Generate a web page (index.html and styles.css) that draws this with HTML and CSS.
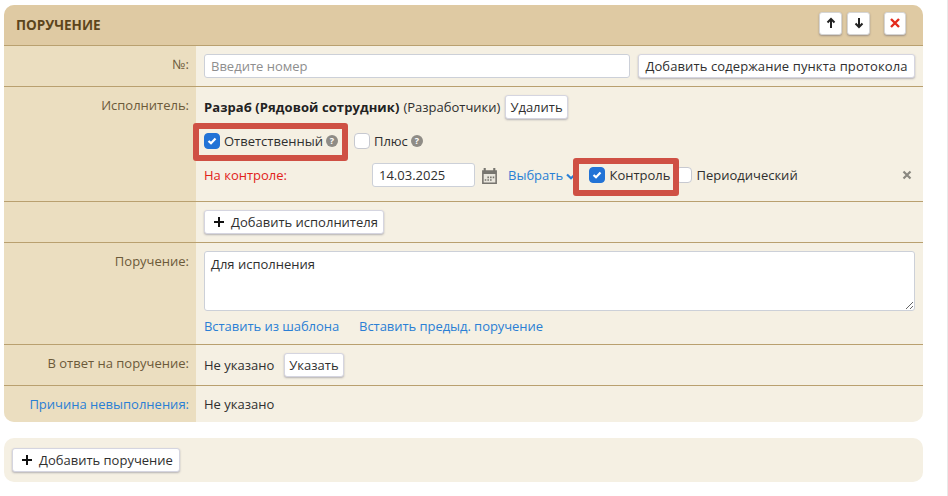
FILE: index.html
```html
<!DOCTYPE html>
<html lang="ru">
<head>
    <meta charset="UTF-8">
    <meta name="viewport" content="width=device-width, initial-scale=1.0">
    <title>Поручение</title>
    <link rel="stylesheet" href="styles.css">
</head>
<body>
    <div class="card">
        <div class="card-head">
            <h3>ПОРУЧЕНИЕ</h3>
            <div class="head-btns">
                <button class="btn-sq"><svg width="12" height="12" viewBox="0 0 12 12"><path d="M6 11V2M2.500 5.500 6 2l3.500 3.500" fill="none" stroke="#222" stroke-width="2"/></svg></button>
                <button class="btn-sq"><svg width="12" height="12" viewBox="0 0 12 12"><path d="M6 1v9M2.500 6.500 6 10l3.500-3.500" fill="none" stroke="#222" stroke-width="2"/></svg></button>
                <button class="btn-sq btn-close"><svg width="12" height="12" viewBox="0 0 12 12"><path d="M2 2l8 8M10 2l-8 8" fill="none" stroke="#e32a1c" stroke-width="2.400"/></svg></button>
            </div>
        </div>

        <div class="row row-num">
            <div class="label">№:</div>
            <div class="value value-line">
                <input class="txt txt-num" type="text" placeholder="Введите номер">
                <button class="btn btn-proto">Добавить содержание пункта протокола</button>
            </div>
        </div>

        <div class="row row-exec">
            <div class="label">Исполнитель:</div>
            <div class="value">
                <div class="exec-name">
                    <b>Разраб (Рядовой сотрудник)</b> (Разработчики)
                    <button class="btn btn-del">Удалить</button>
                </div>
                <div class="exec-flags">
                    <span class="flag flag-main"><i class="check on"><svg width="10" height="8" viewBox="0 0 10 8"><path d="M1.500 4l2.500 2.200L8.500 1.500" fill="none" stroke="#fff" stroke-width="2.200"/></svg></i>Ответственный <i class="hint">?</i></span>
                    <span class="flag"><i class="check"></i>Плюс <i class="hint">?</i></span>
                    <span class="mark mark-main"></span>
                </div>
                <div class="exec-control">
                    <span class="control-label">На контроле:</span>
                    <input class="txt txt-date" type="text" value="14.03.2025">
                    <svg class="cal" width="17" height="17" viewBox="0 0 16 16"><path d="M1 3h14v13H1z" fill="#77756f"/><path d="M3.500 1v3M12.500 1v3" stroke="#77756f" stroke-width="2"/><path d="M2.500 6.500h11v8h-11z" fill="#e9e6dd"/><path d="M6 9h1.500v1.500H6zM8.500 9H10v1.500H8.500zM11 9h1.500v1.500H11zM3.500 11.500H5V13H3.500zM6 11.500h1.500V13H6zM8.500 11.500H10V13H8.500z" fill="#77756f"/></svg>
                    <a class="link pick" href="#">Выбрать <svg width="10" height="7" viewBox="0 0 10 7"><path d="M1 1.500l4 3.800 4-3.800" fill="none" stroke="#2a7fd5" stroke-width="2.200"/></svg></a>
                    <span class="flag flag-ctrl"><i class="check on"><svg width="10" height="8" viewBox="0 0 10 8"><path d="M1.500 4l2.500 2.200L8.500 1.500" fill="none" stroke="#fff" stroke-width="2.200"/></svg></i>Контроль</span>
                    <span class="flag flag-period"><i class="check"></i>Периодический</span>
                    <svg class="del" width="10" height="10" viewBox="0 0 10 10"><path d="M1.500 1.500l7 7M8.500 1.500l-7 7" fill="none" stroke="#8a8880" stroke-width="2.200"/></svg>
                    <span class="mark mark-ctrl"></span>
                </div>
            </div>
        </div>

        <div class="row row-add">
            <div class="label"></div>
            <div class="value">
                <button class="btn btn-plus"><span class="plus"></span>Добавить исполнителя</button>
            </div>
        </div>

        <div class="row row-task">
            <div class="label">Поручение:</div>
            <div class="value">
                <textarea class="area">Для исполнения</textarea>
                <div class="task-links">
                    <a class="link" href="#">Вставить из шаблона</a>
                    <a class="link" href="#">Вставить предыд. поручение</a>
                </div>
            </div>
        </div>

        <div class="row row-reply">
            <div class="label">В ответ на поручение:</div>
            <div class="value value-line">
                Не указано
                <button class="btn">Указать</button>
            </div>
        </div>

        <div class="row row-reason">
            <div class="label"><a class="link" href="#">Причина невыполнения:</a></div>
            <div class="value">Не указано</div>
        </div>
    </div>

    <div class="card-bottom">
        <button class="btn btn-plus"><span class="plus"></span>Добавить поручение</button>
    </div>
</body>
</html>
```

FILE: styles.css
```css
*{box-sizing:border-box;}
html,body{height:100%;}
body{margin:0;padding:5px 24px 0 4px;background:#fff;border-right:1px solid #e9e9e9;color:#2f2f2f;font-family:'Open Sans','Noto Sans',sans-serif;font-size:13px;line-height:18px;overflow:hidden;}
button,input,textarea{font:inherit;color:inherit;}
a{text-decoration:none;}
.link{color:#2a7fd5;}

.card{background:#f5f0e3;border-radius:10px;overflow:hidden;}
.card-head{display:flex;align-items:center;justify-content:space-between;height:41px;padding:0 17px 0 12px;background:#dfcaa3;border-bottom:1px solid #b9a06f;}
.card-head h3{margin:0;color:#5c451c;font-size:13.500px;font-weight:700;}
.head-btns{display:flex;gap:5px;margin-bottom:4px;}
.btn-sq{display:flex;align-items:center;justify-content:center;width:23px;height:23px;padding:0;background:#fff;border:1px solid #d5d5d5;border-radius:3px;box-shadow:0 1px 2px rgba(60,60,90,.4);}
.btn-close{width:22px;margin-left:9px;}

.row{display:flex;border-bottom:1px solid #b9a06f;}
.row:last-child{border-bottom:0;}
.label{flex:0 0 192px;padding:9px 7px 0 0;background:#ebdec0;color:#6b5a3a;text-align:right;}
.value{flex:1;padding:8px 8px 0 8px;min-width:0;}
.value-line{display:flex;align-items:center;padding-top:0;}

.row-num{height:41px;}
.row-exec{height:115px;}
.row-add{height:41px;}
.row-task{height:102px;}
.row-reply{height:41px;}
.row-reason{height:36px;}
.row-reason .value{padding-top:9px;}

.txt{height:24px;padding:0 6px;background:#fff;border:1px solid #ccd0d8;border-radius:3px;outline:0;}
.txt::placeholder{color:#8e8e8e;}
.txt-num{width:426px;margin-right:8px;}
.txt-date{width:103px;}
.btn{height:24px;padding:0 4px;background:#fff;border:1px solid #d5d5e0;border-radius:3px;box-shadow:0 1px 2px rgba(60,60,90,.35);white-space:nowrap;}
.btn-proto{width:277px;padding:0;letter-spacing:.1px;}
.btn-del{margin-left:1px;}
.btn-plus{display:inline-flex;align-items:center;padding:0 5px 0 9px;}
.card-bottom .btn-plus{padding-right:6px;}
.plus{display:inline-block;width:10px;height:10px;margin-right:7px;background:linear-gradient(#111,#111) center/10px 2px no-repeat,linear-gradient(#111,#111) center/2px 10px no-repeat;}
.row-reply .btn{margin-left:10px;}

.exec-name{display:flex;align-items:center;gap:4px;height:24px;}
.exec-name b{color:#222;letter-spacing:.08px;}
.exec-flags{position:relative;display:flex;align-items:center;gap:16px;height:24px;margin-top:10px;}
.exec-control{position:relative;display:flex;align-items:center;height:24px;margin-top:10px;}
.flag{display:inline-flex;align-items:center;}
.check{display:inline-flex;align-items:center;justify-content:center;width:16px;height:16px;margin-right:4px;background:#fff;border:1px solid #c7c9d0;border-radius:4px;}
.check.on{background:#2273d6;border-color:#2273d6;}
.hint{display:inline-flex;align-items:center;justify-content:center;width:12px;height:12px;margin-left:3px;background:#8f8c86;border-radius:50%;color:#fff;font-size:9px;font-style:normal;font-weight:700;line-height:12px;}
.control-label{width:168px;color:#e2231a;}
.cal{margin-left:6px;}
.pick{margin-left:10px;}
.flag-ctrl{margin-left:13px;}
.flag-period{margin-left:6px;}
.del{position:absolute;right:3px;top:7px;}
.mark{position:absolute;border:6px solid #cf5044;border-radius:3px;pointer-events:none;}
.mark-main{left:-11px;top:-6px;width:155px;height:38px;}
.mark-ctrl{left:369px;top:-5px;width:106px;height:38px;}

.area{display:block;width:711px;height:60px;padding:3px 6px;background:#fff;border:1px solid #ccd0d8;border-radius:3px;outline:0;}
.task-links{display:flex;gap:20px;margin-top:6px;letter-spacing:-.05px;}

.card-bottom{margin-top:16px;height:44px;padding:10px 8px;background:#f5f0e3;border-radius:10px;}
```
